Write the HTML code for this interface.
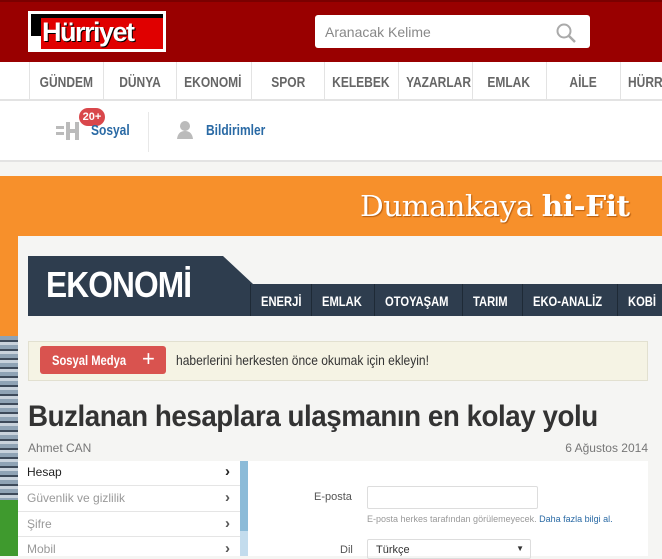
<!DOCTYPE html>
<html><head><meta charset="utf-8"><style>
*{margin:0;padding:0;box-sizing:border-box}
body{width:662px;height:556px;overflow:hidden;position:relative;background:#f5f5f3;font-family:"Liberation Sans",sans-serif}
.abs{position:absolute}
.n{font-weight:bold}
.sq{display:inline-block;transform:scaleX(0.8);transform-origin:center}
.nv span{position:absolute;top:0;width:74px;text-align:center;white-space:nowrap}
.nv i{position:absolute;top:0;width:1px;height:38px;background:#e3e3e3}
</style></head><body>
<!-- red header -->
<div class="abs" style="left:0;top:0;width:662px;height:62px;background:#990000;border-top:2px solid #7a0000"></div>
<div class="abs" style="left:28px;top:11px;width:138px;height:41px;background:#fff"></div>
<div class="abs" style="left:31px;top:14px;width:132px;height:35px;background:#e00000"></div>
<div class="abs" style="left:31px;top:14px;width:132px;height:4px;background:#000"></div>
<div class="abs" style="left:31px;top:14px;width:10px;height:22px;background:#000"></div>
<div class="abs" style="left:31px;top:36px;width:10px;height:13px;background:#fff"></div>
<div class="abs n" style="left:42px;top:16px;font-size:27px;color:#fff;letter-spacing:-1.5px;line-height:32px;text-shadow:1px 1px 0 #000">Hürriyet</div>
<div class="abs" style="left:315px;top:15px;width:275px;height:33px;background:#fff;border-radius:3px"></div>
<div class="abs" style="left:325px;top:24px;font-size:14px;color:#888">Aranacak Kelime</div>
<svg class="abs" style="left:555px;top:22px" width="22" height="22"><circle cx="9" cy="9" r="6.5" fill="none" stroke="#aaa" stroke-width="2"/><line x1="14" y1="14" x2="20" y2="20" stroke="#aaa" stroke-width="2.5"/></svg>
<!-- nav -->
<div class="abs" style="left:0;top:62px;width:662px;height:39px;background:#fff;border-bottom:2px solid #e3e3e3"></div>
<div class="abs n nv" style="left:0;top:62px;height:38px;width:662px;font-size:15px;color:#666;line-height:42px">
<i style="left:29px"></i><i style="left:103px"></i><i style="left:176px"></i><i style="left:251px"></i><i style="left:324px"></i><i style="left:398px"></i><i style="left:472px"></i><i style="left:546px"></i><i style="left:620px"></i>
<span style="left:29px"><b class="sq">GÜNDEM</b></span>
<span style="left:103px"><b class="sq">DÜNYA</b></span>
<span style="left:176px"><b class="sq">EKONOMİ</b></span>
<span style="left:251px"><b class="sq">SPOR</b></span>
<span style="left:324px"><b class="sq">KELEBEK</b></span>
<span style="left:398px"><b class="sq">YAZARLAR</b></span>
<span style="left:472px"><b class="sq">EMLAK</b></span>
<span style="left:546px"><b class="sq">AİLE</b></span>
<span style="left:628px;width:auto;text-align:left"><b class="sq" style="transform-origin:left">HÜRRİYET</b></span>
</div>
<!-- social row -->
<div class="abs" style="left:0;top:101px;width:662px;height:61px;background:#fff;border-bottom:2px solid #e3e3e3"></div>
<div class="abs" style="left:148px;top:112px;width:1px;height:40px;background:#e8e8e8"></div>
<svg class="abs" style="left:56px;top:121px" width="26" height="20"><rect x="0" y="5" width="8" height="3" fill="#bbb"/><rect x="0" y="11" width="8" height="3" fill="#bbb"/><rect x="10" y="1" width="4" height="18" fill="#bbb"/><rect x="19" y="1" width="4" height="18" fill="#bbb"/><rect x="10" y="8" width="13" height="4" fill="#bbb"/></svg>
<div class="abs n" style="left:79px;top:108px;width:26px;height:18px;border-radius:9px;background:#d9474b;color:#fff;font-size:11px;text-align:center;line-height:18px">20+</div>
<div class="abs n" style="left:91px;top:122px;font-size:15px;color:#2a6aa5"><span class="sq" style="transform-origin:left">Sosyal</span></div>
<svg class="abs" style="left:176px;top:120px" width="20" height="20"><circle cx="9" cy="6" r="5" fill="#bbb"/><path d="M1 19 Q2 11 9 11 Q16 11 17 19Z" fill="#bbb"/></svg>
<div class="abs n" style="left:206px;top:122px;font-size:15px;color:#2a6aa5"><span class="sq" style="transform-origin:left">Bildirimler</span></div>
<!-- orange -->
<div class="abs" style="left:0;top:176px;width:662px;height:60px;background:#f7902b"></div>
<div class="abs" style="left:0;top:236px;width:18px;height:100px;background:#f7902b"></div>
<div class="abs" style="left:0;top:336px;width:18px;height:190px;background:repeating-linear-gradient(#8fa3b5 0 4px,#3d4a5a 4px 6px,#c8d2dc 6px 9px)"></div>
<div class="abs" style="left:0;top:500px;width:18px;height:56px;background:#3f9a2e"></div>
<div class="abs" style="left:360px;top:189px;font-family:'DejaVu Serif','Liberation Serif',serif;font-size:29px;color:#fff;text-shadow:1px 1px 1px #b35c10;white-space:nowrap;letter-spacing:-0.5px;transform:scaleX(1.02);transform-origin:left">Dumankaya <b>hi-Fit</b></div>
<!-- ekonomi -->
<div class="abs" style="left:28px;top:256px;width:230px;height:60px;background:#2e3d4e;clip-path:polygon(0 0,195px 0,225px 28px,225px 60px,0 60px)"></div>
<div class="abs" style="left:198px;top:284px;width:464px;height:32px;background:#2e3d4e"></div>
<div class="abs n" style="left:46px;top:264px;font-size:36px;color:#fff;letter-spacing:-1px;transform:scaleX(0.88);transform-origin:left">EKONOMİ</div>
<div class="abs n" style="left:198px;top:284px;width:464px;height:32px;line-height:34px;font-size:14px;color:#fff;white-space:nowrap">
<i class="abs" style="left:52px;top:0;width:1px;height:32px;background:#1e2a36"></i>
<i class="abs" style="left:113px;top:0;width:1px;height:32px;background:#1e2a36"></i>
<i class="abs" style="left:176px;top:0;width:1px;height:32px;background:#1e2a36"></i>
<i class="abs" style="left:264px;top:0;width:1px;height:32px;background:#1e2a36"></i>
<i class="abs" style="left:324px;top:0;width:1px;height:32px;background:#1e2a36"></i>
<i class="abs" style="left:419px;top:0;width:1px;height:32px;background:#1e2a36"></i>
<span class="abs" style="left:63px;transform:scaleX(0.8);transform-origin:left">ENERJİ</span>
<span class="abs" style="left:124px;transform:scaleX(0.8);transform-origin:left">EMLAK</span>
<span class="abs" style="left:187px;transform:scaleX(0.8);transform-origin:left">OTOYAŞAM</span>
<span class="abs" style="left:275px;transform:scaleX(0.8);transform-origin:left">TARIM</span>
<span class="abs" style="left:335px;transform:scaleX(0.8);transform-origin:left">EKO-ANALİZ</span>
<span class="abs" style="left:430px;transform:scaleX(0.8);transform-origin:left">KOBİ</span>
</div>
<!-- sosyal medya bar -->
<div class="abs" style="left:28px;top:341px;width:620px;height:40px;background:#f5f3e4;border:1px solid #e2e0d0"></div>
<div class="abs" style="left:40px;top:346px;width:126px;height:28px;background:#d9534f;border-radius:3px"></div>
<div class="abs n" style="left:52px;top:346px;color:#fff;font-size:14px;line-height:28px;white-space:nowrap"><span class="sq" style="transform-origin:left">Sosyal Medya</span></div>
<div class="abs" style="left:142px;top:343px;color:#fff;font-size:22px;line-height:32px">+</div>
<div class="abs" style="left:176px;top:352px;font-size:14px;color:#333;white-space:nowrap;transform:scaleX(0.86);transform-origin:left">haberlerini herkesten önce okumak için ekleyin!</div>
<!-- headline -->
<div class="abs n" style="left:28px;top:400px;font-size:30px;color:#333;letter-spacing:-0.5px;white-space:nowrap;transform:scaleX(0.925);transform-origin:left">Buzlanan hesaplara ulaşmanın en kolay yolu</div>
<div class="abs" style="left:28px;top:441px;font-size:12px;color:#777">Ahmet CAN</div>
<div class="abs" style="right:14px;top:441px;font-size:12px;color:#777">6 Ağustos 2014</div>
<!-- screenshot -->
<div class="abs" style="left:18px;top:461px;width:630px;height:95px;background:#fff"></div>
<div class="abs" style="left:18px;top:461px;width:222px;height:95px;font-size:12px;color:#999">
<div style="height:25px;border-bottom:1px solid #e5e5e5;padding:4px 0 0 9px;color:#222">Hesap<span style="float:right;margin-right:10px;font-weight:bold;font-size:15px;line-height:14px">›</span></div>
<div style="height:26px;border-bottom:1px solid #e5e5e5;padding:5px 0 0 9px">Güvenlik ve gizlilik<span style="float:right;margin-right:10px;font-weight:bold;color:#555;font-size:15px;line-height:14px">›</span></div>
<div style="height:25px;border-bottom:1px solid #e5e5e5;padding:5px 0 0 9px">Şifre<span style="float:right;margin-right:10px;font-weight:bold;color:#555;font-size:15px;line-height:14px">›</span></div>
<div style="height:20px;padding:5px 0 0 9px">Mobil<span style="float:right;margin-right:10px;font-weight:bold;color:#555;font-size:15px;line-height:14px">›</span></div>
</div>
<div class="abs" style="left:240px;top:461px;width:8px;height:95px;background:#c3dced"></div>
<div class="abs" style="left:240px;top:461px;width:8px;height:70px;background:#8cbbd8"></div>
<div class="abs" style="left:314px;top:491px;font-size:11px;color:#555">E-posta</div>
<div class="abs" style="left:367px;top:486px;width:171px;height:23px;border:1px solid #ddd;border-radius:2px"></div>
<div class="abs" style="left:367px;top:514px;font-size:9px;color:#999;white-space:nowrap">E-posta herkes tarafından görülemeyecek. <span style="color:#2a6aa5">Daha fazla bilgi al.</span></div>
<div class="abs" style="left:340px;top:544px;font-size:11px;color:#555">Dil</div>
<div class="abs" style="left:367px;top:539px;width:164px;height:20px;border:1px solid #ddd;border-radius:2px;font-size:11px;color:#333;padding:4px 0 0 8px">Türkçe<span style="float:right;margin-right:6px;font-size:8px">▼</span></div>
</body></html>
